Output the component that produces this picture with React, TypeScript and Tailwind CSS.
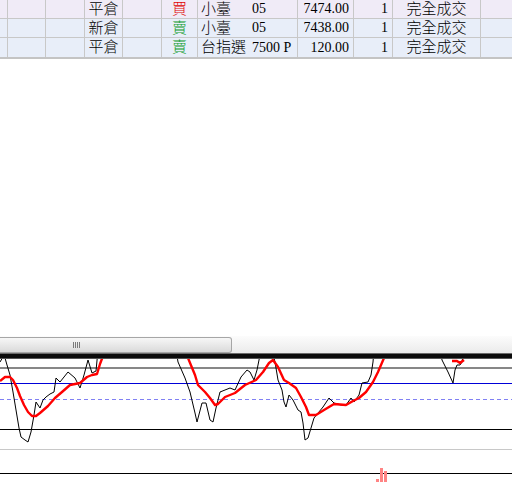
import React from "react";

type Row = {
  kind: string;
  side: "買" | "賣";
  name: string;
  code: string;
  price: string;
  qty: string;
  status: string;
  bg: string;
};

const rows: Row[] = [
  { kind: "平倉", side: "買", name: "小臺", code: "05", price: "7474.00", qty: "1", status: "完全成交", bg: "bg-[#f0ebf7]" },
  { kind: "新倉", side: "賣", name: "小臺", code: "05", price: "7438.00", qty: "1", status: "完全成交", bg: "bg-[#e8eef9]" },
  { kind: "平倉", side: "賣", name: "台指選", code: "7500 P", price: "120.00", qty: "1", status: "完全成交", bg: "bg-[#e8eef9]" },
];

const cell = "h-full shrink-0 border-r border-[#c8c8c8] flex items-center";
const cjk = "text-[15px] leading-none font-light";

const black =
  "0,362 3,357 5,358 7,365 10,375 13,392 16,410 19,428 21,437 25,440 28,442 31,432 34,415 36,402 40,408 43,400 46,397 50,394 54,392 56,378 60,382 68,372 75,378 80,388 84,375 88,360 92,373 96,371 98,350 100,340 174,340 176,350 178,362 185,378 190,392 195,413 197,422 202,403 206,403 210,420 213,422 216,408 220,392 225,390 230,388 235,390 241,377 247,370 250,372 254,380 257,370 259,360 261,350 272,350 275,362 278,380 282,390 284,402 286,407 289,395 293,400 298,410 301,412 303,423 305,440 308,438 311,428 314,418 323,407 329,398 334,403 341,405 346,405 351,398 354,402 359,395 362,383 368,382 371,375 373,362 374,350 376,340 438,340 440,350 442,360 448,372 453,383 455,370 457,365 460,365 462,362 464,350";

const red =
  "0,381 5,377 10,377 13,380 17,388 20,396 24,405 28,412 32,416 36,416 40,413 48,406 55,398 62,392 70,385 80,383 87,377 92,375 97,374 100,364 103,356 106,345 184,345 186,352 188,358 195,375 198,385 205,392 210,398 215,405 218,404 225,397 235,393 245,385 256,380 263,372 269,363 273,360 278,367 284,380 289,383 296,388 301,397 306,407 309,415 316,415 324,410 334,404 346,405 353,401 359,398 366,392 373,382 378,372 384,358 386,345";

function Table() {
  return (
    <div className="shrink-0 border-b-2 border-[#c4c4c4]">
      {rows.map((r, i) => (
        <div key={i} className={`flex h-[19px] border-b border-[#c8c8c8] last:border-b-0 ${r.bg}`}>
          <div className={`${cell} w-[8px]`} />
          <div className={`${cell} w-[38px]`} />
          <div className={`${cell} w-[39px]`} />
          <div className={`${cell} w-[38px] justify-center`}>
            <span className={cjk}>{r.kind}</span>
          </div>
          <div className={`${cell} w-[39px]`} />
          <div className={`${cell} w-[36px] justify-center`}>
            <span className={`${cjk} ${r.side === "買" ? "text-[#e00000]" : "text-[#0a9a2a]"}`}>{r.side}</span>
          </div>
          <div className={`${cell} w-[100px] pl-[3px]`}>
            <span className={`${cjk} w-[51px]`}>{r.name}</span>
            <span className="text-[14px] leading-none">{r.code}</span>
          </div>
          <div className={`${cell} w-[56px] justify-end pr-[4px]`}>
            <span className="text-[14px] leading-none">{r.price}</span>
          </div>
          <div className={`${cell} w-[39px] justify-end pr-[4px]`}>
            <span className="text-[14px] leading-none">{r.qty}</span>
          </div>
          <div className={`${cell} w-[88px] justify-center`}>
            <span className={cjk}>{r.status}</span>
          </div>
          <div className="h-full flex-1" />
        </div>
      ))}
    </div>
  );
}

function ScrollBar() {
  return (
    <div className="flex h-[17px] shrink-0 bg-gradient-to-b from-[#fcfcfc] to-[#ebebeb]">
      <div className="mt-px flex h-[16px] w-[232px] items-center justify-center rounded-r-[3px] border border-l-0 border-[#a6a6a6] bg-gradient-to-b from-[#f7f7f7] to-[#dadada] pr-[78px]">
        <div className="flex gap-px">
          <span className="h-[6px] w-px bg-[#7a7a7a]" />
          <span className="h-[6px] w-px bg-[#7a7a7a]" />
          <span className="h-[6px] w-px bg-[#7a7a7a]" />
          <span className="h-[6px] w-px bg-[#7a7a7a]" />
        </div>
      </div>
    </div>
  );
}

function Chart() {
  return (
    <svg width="512" height="129" viewBox="0 353 512 129" className="block shrink-0">
      <defs>
        <clipPath id="plot">
          <rect x="0" y="359" width="512" height="123" />
        </clipPath>
      </defs>
      <rect x="0" y="353" width="512" height="1" fill="#6a6a6a" />
      <rect x="0" y="354" width="512" height="4" fill="#0c0c0c" />
      <rect x="0" y="358" width="512" height="1" fill="#555" />
      <rect x="0" y="367" width="512" height="2" fill="#878787" />
      <rect x="0" y="383" width="512" height="1" fill="#0000d8" />
      <line x1="0" y1="399.5" x2="512" y2="399.5" stroke="#8080f4" strokeWidth="1" strokeDasharray="4 3" />
      <rect x="0" y="429" width="512" height="1" fill="#000" />
      <rect x="0" y="449" width="512" height="1" fill="#c8c8c8" />
      <rect x="0" y="473" width="512" height="1" fill="#000" />
      <g clipPath="url(#plot)" fill="none" strokeLinejoin="round">
        <polyline points={black} stroke="#000" strokeWidth="1" />
        <polyline points={red} stroke="#ff0000" strokeWidth="2.4" />
        <polyline points="452,361 457,361 460,363 464,360" stroke="#ff0000" strokeWidth="2.4" />
      </g>
      <rect x="376" y="479" width="3" height="3" fill="#ff8484" />
      <rect x="380" y="468" width="3" height="14" fill="#ff8484" />
      <rect x="384" y="471" width="3" height="11" fill="#ff8484" />
    </svg>
  );
}

export default function App() {
  return (
    <div
      className="flex h-[482px] w-[512px] flex-col overflow-hidden bg-white text-black"
      style={{ fontFamily: '"Liberation Serif", "Noto Sans CJK TC", serif' }}
    >
      <Table />
      <div className="flex-1" />
      <ScrollBar />
      <Chart />
    </div>
  );
}
